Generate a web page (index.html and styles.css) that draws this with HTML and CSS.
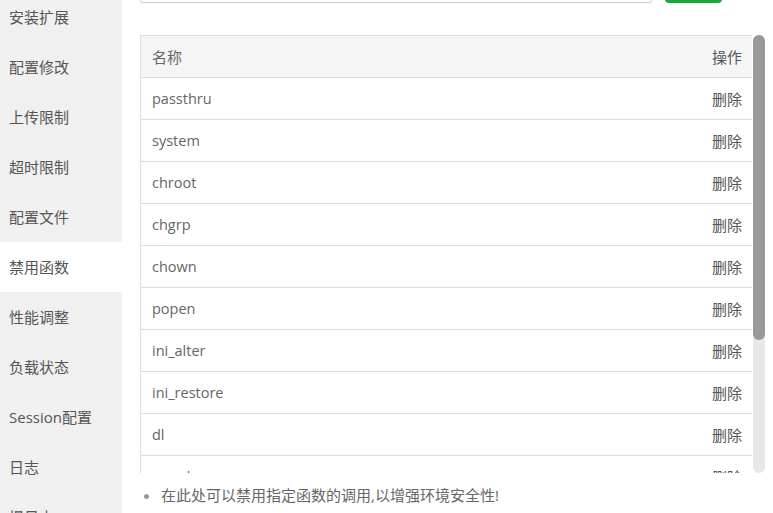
FILE: index.html
```html
<!DOCTYPE html>
<html lang="zh-CN">
<head>
<meta charset="utf-8">
<title>禁用函数</title>
<link rel="stylesheet" href="styles.css">
</head>
<body>
<div class="layout">
  <nav class="menu">
    <div class="menu-list">
      <div class="menu-item">安装扩展</div>
      <div class="menu-item">配置修改</div>
      <div class="menu-item">上传限制</div>
      <div class="menu-item">超时限制</div>
      <div class="menu-item">配置文件</div>
      <div class="menu-item active">禁用函数</div>
      <div class="menu-item">性能调整</div>
      <div class="menu-item">负载状态</div>
      <div class="menu-item">Session配置</div>
      <div class="menu-item">日志</div>
      <div class="menu-item">慢日志</div>
    </div>
  </nav>
  <main class="content">
    <div class="toolbar">
      <input class="fn-input" type="text">
      <button class="btn-add">添加</button>
    </div>
    <div class="table-box">
      <div class="table-wrap">
        <table class="fn-table">
          <thead>
            <tr><th>名称</th><th class="op">操作</th></tr>
          </thead>
          <tbody>
            <tr><td>passthru</td><td class="op">删除</td></tr>
            <tr><td>system</td><td class="op">删除</td></tr>
            <tr><td>chroot</td><td class="op">删除</td></tr>
            <tr><td>chgrp</td><td class="op">删除</td></tr>
            <tr><td>chown</td><td class="op">删除</td></tr>
            <tr><td>popen</td><td class="op">删除</td></tr>
            <tr><td>ini_alter</td><td class="op">删除</td></tr>
            <tr><td>ini_restore</td><td class="op">删除</td></tr>
            <tr><td>dl</td><td class="op">删除</td></tr>
            <tr><td>openlog</td><td class="op">删除</td></tr>
            <tr><td>syslog</td><td class="op">删除</td></tr>
            <tr><td>readlink</td><td class="op">删除</td></tr>
            <tr><td>symlink</td><td class="op">删除</td></tr>
            <tr><td>popepassthru</td><td class="op">删除</td></tr>
          </tbody>
        </table>
      </div>
      <div class="scrollbar"><div class="scroll-thumb"></div></div>
    </div>
    <ul class="help">
      <li>在此处可以禁用指定函数的调用,以增强环境安全性!</li>
    </ul>
  </main>
</div>
</body>
</html>
```
FILE: styles.css
```css
html, body {
  margin: 0;
  padding: 0;
  height: 100%;
  overflow: hidden;
  background: #fff;
  font-family: "Open Sans", "Noto Sans CJK SC", sans-serif;
  color: #666;
}

.layout {
  display: flex;
  height: 513px;
  overflow: hidden;
}

.menu {
  width: 122px;
  flex: none;
  background: #f0f0f0;
  overflow: hidden;
}

.menu-list {
  margin-top: -8px;
  display: flex;
  flex-direction: column;
}

.menu-item {
  height: 50px;
  line-height: 50px;
  padding-left: 9px;
  font-size: 15px;
  color: #555;
  white-space: nowrap;
}

.menu-item.active {
  background: #fff;
}

.content {
  flex: 1;
  padding-left: 18px;
  padding-right: 8px;
  display: flex;
  flex-direction: column;
  min-width: 0;
}

.toolbar {
  margin-top: -27px;
  height: 30px;
  display: flex;
  gap: 13px;
  flex: none;
}

.fn-input {
  width: 512px;
  height: 30px;
  box-sizing: border-box;
  border: 1px solid #ccc;
  border-radius: 2px;
  margin: 0;
  padding: 0 8px;
}

.btn-add {
  width: 57px;
  height: 30px;
  border: none;
  border-radius: 4px;
  background: #20a53a;
  color: #fff;
  font-size: 13px;
  font-family: inherit;
}

.table-box {
  margin-top: 32px;
  height: 438px;
  display: flex;
  gap: 1px;
  flex: none;
}

.table-wrap {
  flex: 1;
  height: 100%;
  overflow: hidden;
}

.scrollbar {
  width: 12px;
  flex: none;
  background: #e8e8e8;
  border-radius: 6px;
}

.scroll-thumb {
  height: 305px;
  background: #999;
  border-radius: 6px;
}

.fn-table {
  width: 100%;
  border-collapse: collapse;
  font-size: 15px;
}

.fn-table th,
.fn-table td {
  height: 42px;
  box-sizing: border-box;
  padding: 0 10px 0 11px;
  border-top: 1px solid #ddd;
  border-bottom: 1px solid #ddd;
  text-align: left;
  font-weight: normal;
  color: #666;
}

.fn-table td {
  font-size: 14.5px;
}

.fn-table td.op,
.fn-table th.op {
  font-size: 15px;
  color: #555;
}

.fn-table th:first-child,
.fn-table td:first-child {
  border-left: 1px solid #ddd;
}

.fn-table th {
  background: #f5f5f5;
}

.fn-table .op {
  text-align: right;
  width: 60px;
}

.help {
  margin: 11px 0 0;
  padding-left: 21px;
  font-size: 15px;
  color: #666;
}

.help li::marker {
  color: #999;
}
```
